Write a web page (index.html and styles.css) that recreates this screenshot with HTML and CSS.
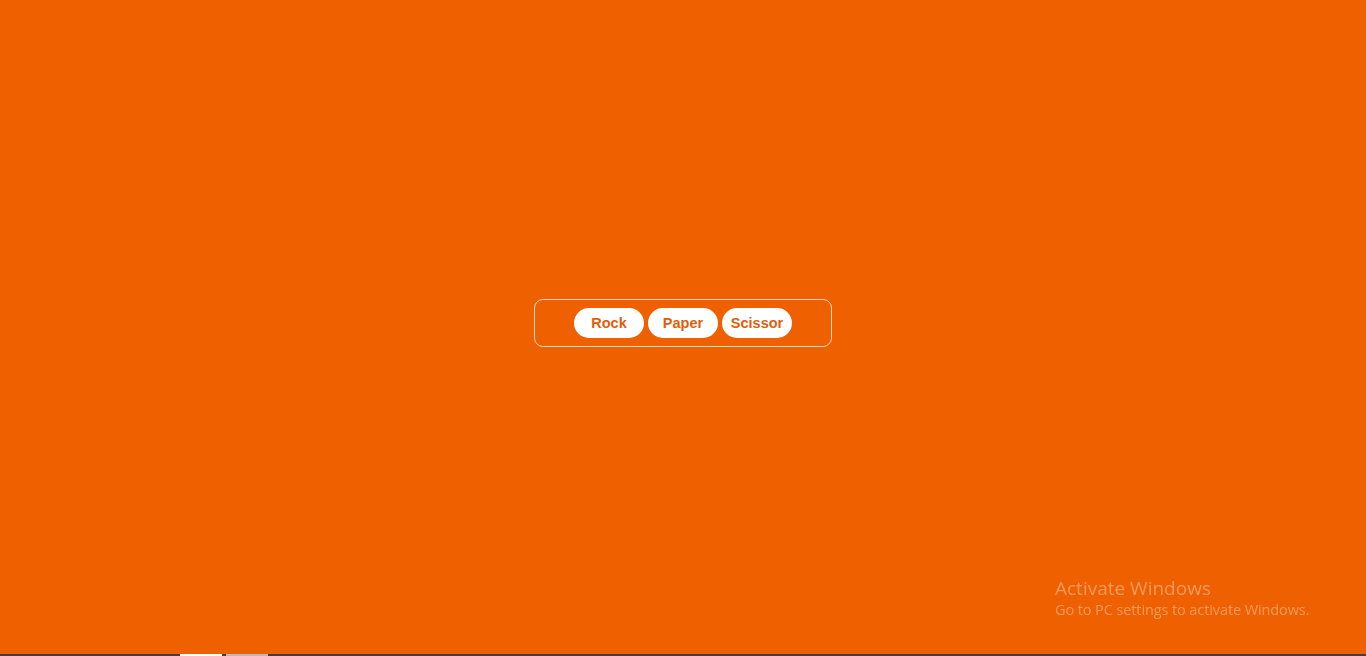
FILE: index.html
```html
<!DOCTYPE html>
<html lang="en">
<head>
<meta charset="utf-8">
<title>Rock Paper Scissor</title>
<link rel="stylesheet" href="styles.css">
</head>
<body>
<main class="stage">
  <div class="panel">
    <button class="choice">Rock</button>
    <button class="choice">Paper</button>
    <button class="choice">Scissor</button>
  </div>
</main>
<div class="taskbar">
  <span class="tb-item tb-item--active"></span>
  <span class="tb-item"></span>
</div>
<div class="watermark">
  <div class="wm-title">Activate Windows</div>
  <div class="wm-sub">Go to PC settings to activate Windows.</div>
</div>
</body>
</html>
```
FILE: styles.css
```css
html, body {
  margin: 0;
  padding: 0;
  height: 100%;
}
body {
  background: #ee6000;
  display: flex;
  flex-direction: column;
  font-family: "Liberation Sans", Arial, sans-serif;
  overflow: hidden;
}
.stage {
  flex: 1;
  display: flex;
  align-items: center;
  justify-content: center;
  padding-bottom: 9px;
}
.panel {
  width: 296px;
  height: 46px;
  border: 1px solid #f7d9c0;
  border-radius: 9px;
  display: flex;
  align-items: center;
  justify-content: center;
  gap: 4px;
  box-sizing: content-box;
}
.choice {
  width: 70px;
  height: 30px;
  border: none;
  border-radius: 15px;
  background: #ffffff;
  color: #e05e0a;
  font-family: "Liberation Sans", Arial, sans-serif;
  font-weight: 700;
  font-size: 14.5px;
  padding: 0;
  cursor: pointer;
}
.taskbar {
  height: 2px;
  background: #3d3d52;
  display: flex;
  padding-left: 180px;
  gap: 4px;
}
.tb-item {
  width: 42px;
  height: 2px;
  background: #b9b9c4;
}
.tb-item--active {
  background: #ffffff;
}
.watermark {
  position: fixed;
  left: 1055px;
  top: 576px;
  font-family: "Open Sans", "Noto Sans", sans-serif;
  pointer-events: none;
  color: #f29a5e;
}
.wm-title {
  font-size: 19px;
  font-weight: 400;
  line-height: 24px;
}
.wm-sub {
  font-size: 14.5px;
  line-height: 18px;
  margin-top: 1px;
  letter-spacing: -0.1px;
}
```
